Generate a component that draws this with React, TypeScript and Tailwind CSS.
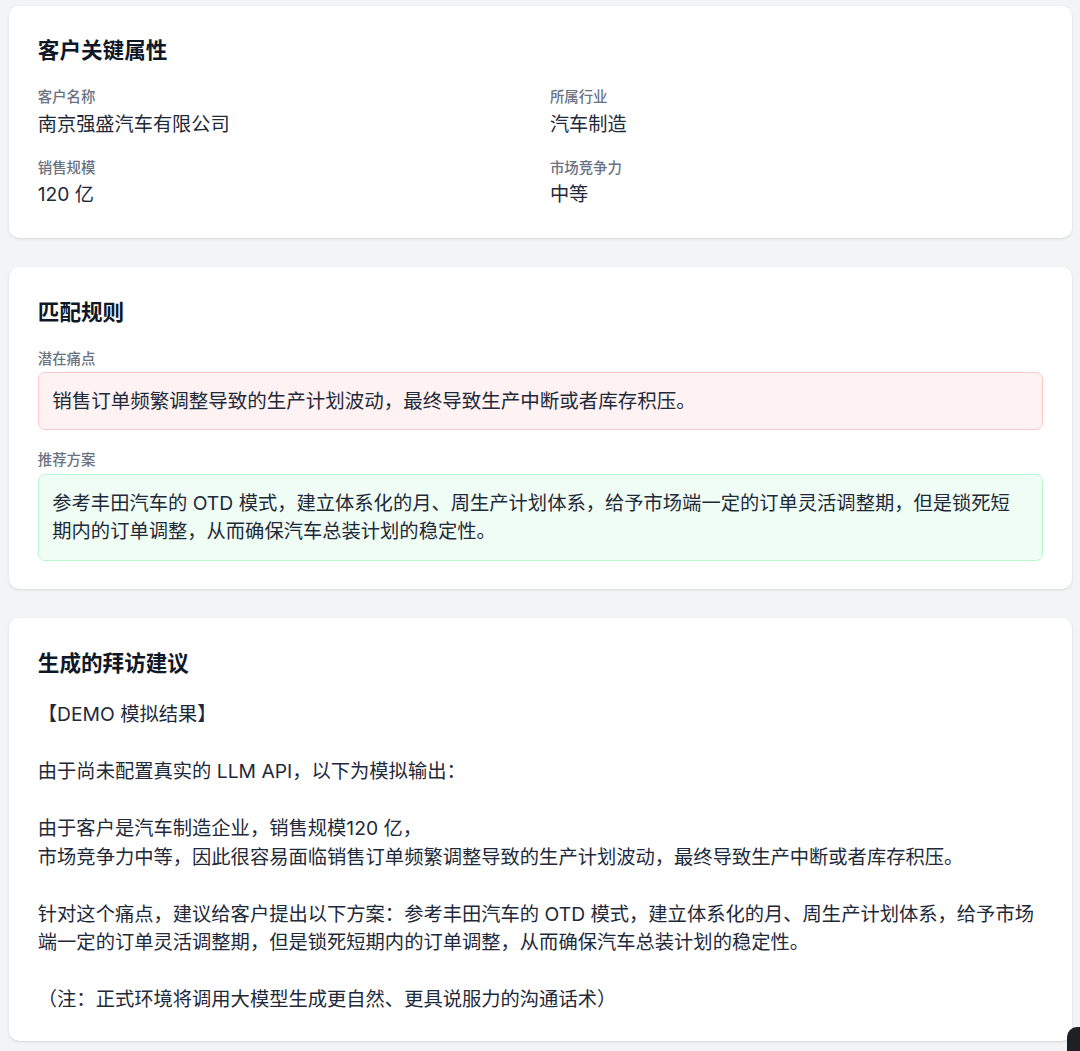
const customer = [
  { label: '客户名称', value: '南京强盛汽车有限公司' },
  { label: '所属行业', value: '汽车制造' },
  { label: '销售规模', value: '120 亿' },
  { label: '市场竞争力', value: '中等' },
];

// line break after 给予市场 keeps the wrap of the original output
const suggestion = `【DEMO 模拟结果】

由于尚未配置真实的 LLM API，以下为模拟输出：

由于客户是汽车制造企业，销售规模120 亿，
市场竞争力中等，因此很容易面临销售订单频繁调整导致的生产计划波动，最终导致生产中断或者库存积压。

针对这个痛点，建议给客户提出以下方案：参考丰田汽车的 OTD 模式，建立体系化的月、周生产计划体系，给予市场
端一定的订单灵活调整期，但是锁死短期内的订单调整，从而确保汽车总装计划的稳定性。

（注：正式环境将调用大模型生成更自然、更具说服力的沟通话术）`;

function Card({ title, children }: { title: string; children: React.ReactNode }) {
  return (
    <section className="bg-white rounded-[10px] shadow-sm p-[28.8px]">
      <h2 className="text-[21.6px] leading-[33.6px] font-bold text-gray-900 mb-[19.2px]">{title}</h2>
      {children}
    </section>
  );
}

function Label({ children }: { children: React.ReactNode }) {
  return <div className="text-[14.4px] leading-[19.2px] font-medium text-gray-500">{children}</div>;
}

export default function App() {
  return (
    <div className="min-h-screen bg-[#f3f4f6] pl-[9px] pr-[8.3px] pt-[5.5px] pb-[30px] font-['Inter','Noto_Sans_CJK_SC',sans-serif] relative">
      <div className="flex flex-col gap-[29px]">
        {/* 客户属性 */}
        <Card title="客户关键属性">
          <div className="grid grid-cols-2 gap-x-[19.2px] gap-y-[19px]">
            {customer.map((item) => (
              <div key={item.label}>
                <Label>{item.label}</Label>
                <div className="mt-[3.6px] text-[19.2px] leading-[28.8px] text-gray-800">{item.value}</div>
              </div>
            ))}
          </div>
        </Card>

        {/* 匹配规则 */}
        <Card title="匹配规则">
          <div className="flex flex-col gap-[20px]">
            <div>
              <div className="mb-[4.6px]">
                <Label>潜在痛点</Label>
              </div>
              <div className="bg-red-50 border border-red-200 rounded-[7px] p-[13.5px] text-[19.5px] leading-[28.8px] text-gray-800">
                销售订单频繁调整导致的生产计划波动，最终导致生产中断或者库存积压。
              </div>
            </div>
            <div>
              <div className="mb-[4.6px]">
                <Label>推荐方案</Label>
              </div>
              <div className="bg-green-50 border border-green-200 rounded-[7px] p-[13.5px] text-[19.3px] leading-[28.8px] text-gray-800">
                参考丰田汽车的 OTD 模式，建立体系化的月、周生产计划体系，给予市场端一定的订单灵活调整期，但是锁死短
                <br />
                期内的订单调整，从而确保汽车总装计划的稳定性。
              </div>
            </div>
          </div>
        </Card>

        {/* 拜访建议 */}
        <Card title="生成的拜访建议">
          <div className="whitespace-pre-wrap text-[19.3px] leading-[28.55px] text-gray-800 -mb-[2px]">{suggestion}</div>
        </Card>
      </div>

      {/* floating button, cut off by the viewport */}
      <div className="fixed left-[1067px] top-[1027px] w-[48px] h-[48px] rounded-[10px] bg-[#1d2125]" />
    </div>
  );
}
